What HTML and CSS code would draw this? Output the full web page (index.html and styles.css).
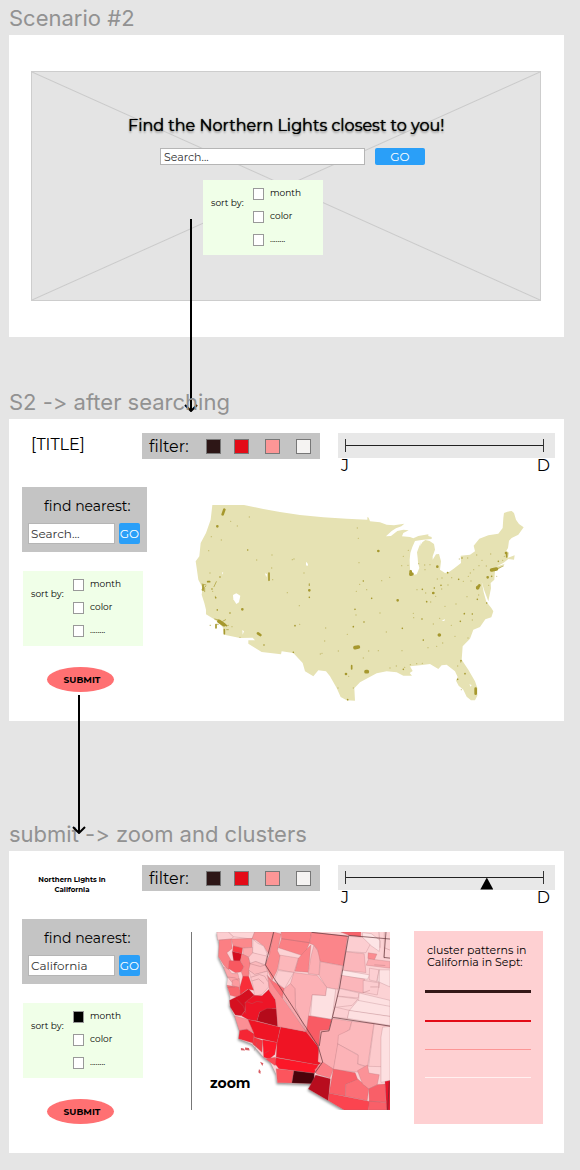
FILE: index.html
```html
<!DOCTYPE html>
<html lang="en">
<head>
<meta charset="utf-8">
<meta name="viewport" content="width=device-width, initial-scale=1">
<title>Northern Lights wireframes</title>
<link rel="stylesheet" href="styles.css">
</head>
<body>
<main class="board">
  <section class="screen">
    <h2 class="screen-name">Scenario #2</h2>
    <div class="frame frame-hero">
      <div class="hero">
        <div class="hero-body">
          <h1 class="hero-title">Find the Northern Lights closest to you!</h1>
          <form class="search search-wide">
            <input class="field" type="text" aria-label="Search location" placeholder="Search...">
            <button class="go" type="button">GO</button>
          </form>
          <fieldset class="sort">
            <legend class="sort-label">sort by:</legend>
            <div class="options">
              <label class="option"><input type="checkbox"><span>month</span></label>
              <label class="option"><input type="checkbox"><span>color</span></label>
              <label class="option"><input type="checkbox"><span>........</span></label>
            </div>
          </fieldset>
        </div>
      </div>
    </div>
    <svg class="arrow arrow-search" viewBox="0 0 14 193" aria-hidden="true"><path d="M7 0V191M1 186L7 192L13 186"/></svg>
  </section>

  <section class="screen screen-results">
    <h2 class="screen-name">S2 -&gt; after searching</h2>
    <div class="frame">
      <header class="top">
        <h3 class="title">[TITLE]</h3>
        <div class="filter">
          <span>filter:</span>
          <button class="swatch dark" type="button" aria-label="Dark"></button>
          <button class="swatch red" type="button" aria-label="Red"></button>
          <button class="swatch pink" type="button" aria-label="Pink"></button>
          <button class="swatch white" type="button" aria-label="White"></button>
        </div>
        <div class="months">
          <div class="rail"><input class="range range-empty" type="range" aria-label="Month" min="0" max="100" value="0"></div>
          <div class="ends"><span>J</span><span>D</span></div>
        </div>
      </header>
      <div class="content">
        <aside class="side">
          <form class="finder">
            <label class="finder-label" for="near1">find nearest:</label>
            <div class="search">
              <input class="field" id="near1" type="text" placeholder="Search...">
              <button class="go" type="button">GO</button>
            </div>
          </form>
          <fieldset class="sort">
            <legend class="sort-label">sort by:</legend>
            <div class="options">
              <label class="option"><input type="checkbox"><span>month</span></label>
              <label class="option"><input type="checkbox"><span>color</span></label>
              <label class="option"><input type="checkbox"><span>........</span></label>
            </div>
          </fieldset>
          <button class="submit" type="button">SUBMIT</button>
        </aside>
        <svg class="usa" viewBox="15 40 990 600" role="img" aria-label="Map of the United States">
          <path fill="#e6e2b3" d="M67 46H162L220 58L270 67L330 76L400 83L470 87L532 90V82L536 84L540 95L570 98L590 105L612 107L643 102L634 110L618 116L605 124L588 140L603 139L622 124L640 120L656 122L640 130L636 140L660 142L670 146L685 139L715 134V139L725 142V148L700 150L675 154L667 172L661 190L659 210L660 238L667 256L680 254L688 235L684 218L683 205L681 188L686 174L693 157L690 170L697 158L706 151L719 154L732 163L735 180L728 200V210L738 194L747 193L753 215L750 240L765 250L778 246L790 238L813 220L812 198L840 195L855 185L851 168L868 147L895 137L925 132L938 115L940 85L942 70L952 66L965 64L972 70L978 90L987 103L1001 113L985 135L965 145L957 153L954 175L949 183L957 189L954 204L974 197L972 210L955 208L940 220L918 231L945 222L928 237L915 243L913 270L902 280L903 296L895 335L882 300L875 275L881 308L889 336L904 355L910 365L904 383L886 389L870 412L850 420L840 447L818 470L815 510L835 540L855 575L862 595V618L855 632L843 632L830 621L820 600L806 588L798 573L803 562L795 545L770 525L755 527L745 538L720 523L690 527L660 530L668 544L659 550L666 558L640 558L620 548L590 545L560 551L510 578L493 596L495 633L470 632L452 622L440 595L420 560L408 545L385 542L370 560L345 545L338 520L310 490L275 485L273 494L215 487L175 462V452H195L188 444L150 445L103 435L98 412L75 390L48 374V360L43 340L35 315L38 295L25 270L20 235L17 215L28 200L32 160L48 130L62 90Z"/>
          <g fill="#fff"><path d="M129 316L139 311L151 318L147 338L139 343L130 329Z"/><path d="M348 216L354 223L353 229L348 227ZM225 251L231 254L229 263ZM157 421L162 425L158 435ZM755 393L765 388L763 394ZM838 584L845 586L842 591ZM97 247L100 249L96 255Z"/></g>
          <g class="city">
            <path stroke-width="4" opacity=".5" d="M122 95h0M142 109h0M178 82h0M94 151h0M64 141h0M56 183h0M200 211h0M246 196h0M292 309h0M312 208h0M358 282h0M328 348h0M329 404h0M307 210h0M396 491h0M404 454h0M407 415h0M445 484h0M472 434h0M502 115h0M505 146h0M507 219h0M509 284h0M498 376h0M499 305h0M530 300h0M575 273h0M599 263h0M589 427h0M636 483h0M619 529h0M570 370h0M654 227h0M635 228h0M640 200h0M655 182h0M686 222h0M704 226h0M720 225h0M705 240h0M742 268h0M756 265h0M785 264h0M808 208h0M833 205h0M860 196h0M902 193h0M876 212h0M867 228h0M889 229h0M851 240h0M835 260h0M843 274h0M820 275h0M774 286h0M737 320h0M722 337h0M765 350h0M798 343h0M831 321h0M866 316h0M847 391h0M834 445h0M795 440h0M740 470h0M714 474h0M700 452h0M671 384h0M670 371h0M758 460h0M784 407h0M749 386h0M730 403h0M812 517h0M803 529h0M697 521h0M680 522h0M565 483h0M536 484h0M520 505h0M444 595h0M490 595h0M476 560h0M391 493h0M342 250h0M245 235h0M248 270h0M60 250h0M76 320h0M82 360h0M68 305h0M126 411h0M115 407h0M150 443h0M600 535h0M644 533h0M661 525h0M814 600h0M938 212h0M943 200h0M920 260h0M896 287h0M841 250h0M755 298h0M707 310h0M681 300h0"/>
            <path stroke-width="5" d="M173 181h0M53 276h6M39 286v16M66 298h0M77 324h0M82 361h0M237 250v22M358 286h0M358 323h0M315 408h0M222 466h0M310 488h0M485 528v10M473 630h0M490 411h0M522 397h0M495 359h0M520 274h0M545 326h0M637 416h0M697 299h0M729 311h0M733 295h0M753 287h0M710 336h0M773 249h0M806 269h0M816 205h0M811 395h0M847 373h0M823 372h0M862 329h0M890 340h0M813 513h0M825 552h0M803 569h0M700 451h0M696 388h0M747 436h0M640 539h0M530 546h0M905 260h0M925 215h0M950 190v12M100 402L110 408M78 405v10M103 420v12M90 262h0M120 370h0"/>
            <path stroke-width="8" d="M98 74L103 60M82 110h0M157 359h0M204 431L211 436M468 553h0M358 302h0M565 184h0M623 332h0M662 245v10M742 231h0M730 310h0M862 295L868 287M893 263h0M857 597v15M948 190h0"/>
            <path stroke-width="11" d="M87 395L102 405M495 474L505 472M528 546h4M748 436h0M663 253h3M905 241L919 238M863 294h0"/>
          </g>
          <path class="city" stroke-width="2" d="M60 407h2M80 404h5M98 395L107 390M74 388L86 391M72 291L79 276M36 283L48 286M44 296V306M35 300L47 290M110 420h5M925 236L940 229"/>
        </svg>
      </div>
    </div>
    <svg class="arrow arrow-submit" viewBox="0 0 14 139" aria-hidden="true"><path d="M7 0V137M1 132L7 138L13 132"/></svg>
  </section>

  <section class="screen screen-zoom">
    <h2 class="screen-name">submit -&gt; zoom and clusters</h2>
    <div class="frame">
      <header class="top">
        <h3 class="title title-small">Northern Lights in California</h3>
        <div class="filter">
          <span>filter:</span>
          <button class="swatch dark" type="button" aria-label="Dark"></button>
          <button class="swatch red" type="button" aria-label="Red"></button>
          <button class="swatch pink" type="button" aria-label="Pink"></button>
          <button class="swatch white" type="button" aria-label="White"></button>
        </div>
        <div class="months">
          <div class="rail"><input class="range" type="range" aria-label="Month" min="0" max="100" value="73"></div>
          <div class="ends"><span>J</span><span>D</span></div>
        </div>
      </header>
      <div class="content">
        <aside class="side">
          <form class="finder">
            <label class="finder-label" for="near2">find nearest:</label>
            <div class="search">
              <input class="field" id="near2" type="text" value="California">
              <button class="go" type="button">GO</button>
            </div>
          </form>
          <fieldset class="sort">
            <legend class="sort-label">sort by:</legend>
            <div class="options">
              <label class="option"><input type="checkbox" checked><span>month</span></label>
              <label class="option"><input type="checkbox"><span>color</span></label>
              <label class="option"><input type="checkbox"><span>........</span></label>
            </div>
          </fieldset>
          <button class="submit" type="button">SUBMIT</button>
        </aside>
        <figure class="detail">
          <svg class="california" viewBox="21 36 591 531" role="img" aria-label="County map of California">
            <path class="land" d="M95 36H612V567H475L420 535L368 505L375 490L275 486L272 460L255 425L235 410L200 370L160 355L163 330L150 290L133 255L135 230L125 195L128 170L115 140L100 110L103 75Z"/>
            <g class="county">
              <path fill="#fccdd0" d="M95 36H130L145 50L138 57L97 60Z"/>
              <path fill="#fdd5d7" d="M130 36H208L200 57L145 50Z"/>
              <path fill="#fb9598" d="M208 36H264L252 105L235 78L212 60L200 57Z"/>
              <path fill="#fb7f83" d="M102 60L138 57L141 85L125 98L140 125L130 150L116 135L100 110Z"/>
              <path fill="#fb898c" d="M138 57L200 55V82L172 84L144 77Z"/>
              <path fill="#f93b43" d="M144 77L172 84L170 101L142 94Z"/>
              <path fill="#d40d1e" d="M141 94L170 101L165 126L145 122Z"/>
              <path fill="#f85860" d="M132 122H165L176 140L168 155L151 158L130 145Z"/>
              <path fill="#fbaaad" d="M175 84L202 82V105L190 111L174 104Z"/>
              <path fill="#fa8084" d="M170 101L190 111L195 130L190 168L173 170L168 155L176 140L165 122Z"/>
              <path fill="#fca6a9" d="M115 140L130 147L140 160L158 160L162 178L142 188L127 170Z"/>
              <path fill="#fdd4d6" d="M203 58L218 70L235 78L245 100L240 112L202 98Z"/>
              <path fill="#fccbce" d="M202 98L244 108L240 134L211 124L195 130L190 111Z"/>
              <path fill="#fbb9bc" d="M195 130L211 124L240 136L246 153L208 163L190 150Z"/>
              <path fill="#fcc5c8" d="M190 150L208 163L246 153L250 200L230 222L208 228L203 196Z"/>
              <path fill="#fb9b9f" d="M142 180L162 175L165 205L140 195Z"/>
              <path fill="#f9666c" d="M125 195L160 200L170 220L155 230L135 225Z"/>
              <path fill="#f92e39" d="M173 168L190 168L205 210L187 207L165 223L164 200Z"/>
              <path fill="#d51020" d="M133 240L165 224L190 206L207 225L183 245L180 270L168 286L150 284L135 260Z"/>
              <path fill="#ed1527" d="M180 245L207 225L230 226L250 208L270 238L275 265L262 265L223 275L215 302L188 297L168 286L180 270Z"/>
              <path fill="#b50b1b" d="M223 275L245 264L275 265L277 318L215 302Z"/>
              <path fill="#fb8f94" d="M148 286L188 297L205 337L185 326L162 330Z"/>
              <path fill="#ef1424" d="M188 297L285 320L275 366L207 350L205 337Z"/>
              <path fill="#f52634" d="M163 330L185 326L206 340L205 368L160 355Z"/>
              <path fill="#f43641" d="M206 350L232 360L230 395L202 370Z"/>
              <path fill="#fc1728" d="M232 358L275 366L268 402L252 415L235 410Z"/>
              <path fill="#ef1424" d="M286 319L362 334L396 376L411 424L398 433L272 410L275 366Z"/>
              <path fill="#fc4b54" d="M240 414L270 410L276 433L267 434Z"/>
              <path fill="#fc1728" d="M272 411L398 433L386 458L280 444L270 430Z"/>
              <path fill="#fc555d" d="M272 444L325 450L319 487L276 486Z"/>
              <path fill="#4b030b" d="M325 450L386 458L386 478L393 490L319 487Z"/>
              <path fill="#fb8e93" d="M248 170L270 204L302 248L362 334L277 318L270 238L252 212Z"/>
              <path fill="#fb7178" d="M245 165L260 181L296 205L291 234L267 202Z"/>
              <path fill="#fb898c" d="M265 36L287 42L276 92L284 108L275 151L260 181L240 134L252 105Z"/>
              <path fill="#fb8084" d="M287 36H378L372 68L288 56ZM288 56L372 68L355 108L279 83Z"/>
              <path fill="#fcb7ba" d="M284 105L339 114L325 157L278 148Z"/>
              <path fill="#fb8287" d="M355 96L376 75L368 156L328 153L339 114Z"/>
              <path fill="#fcafb3" d="M385 75L404 104L400 164L368 160L376 110Z"/>
              <path fill="#fb858a" d="M378 37L485 48L473 137L404 124L396 90L385 75L372 70Z"/>
              <path fill="#fbb2b6" d="M404 125L470 137L457 207L423 202L401 166Z"/>
              <path fill="#fcb1b5" d="M325 157L395 166L423 201L420 226L380 223L369 288L362 334L330 262L328 205L315 190Z"/>
              <path fill="#fccdd0" d="M278 151L325 157L297 205L266 180Z"/>
              <path fill="#fbaaae" d="M297 205L315 190L328 205L330 265L362 334L291 228Z"/>
              <path fill="#fde0e1" d="M423 202L450 207L439 297L375 286L380 224L420 226Z"/>
              <path fill="#f95b64" d="M369 286L438 297L430 328L407 334L399 378L362 334Z"/>
              <path fill="#fbadb1" d="M439 294L498 303L491 327L461 348L444 445L397 423L403 330L430 328Z"/>
              <path fill="#fcb9bc" d="M498 303L564 309L545 438L516 430L516 402L456 370L458 344L492 328Z"/>
              <path fill="#fcb3b7" d="M456 370L517 404L515 430L545 440L515 454L443 447Z"/>
              <path fill="#fccacc" d="M565 309L612 317L590 350L588 438L548 437Z"/>
              <path fill="#fde0e1" d="M590 320L612 318V480L585 485V350Z"/>
              <path fill="#fb7d84" d="M411 424L443 445L433 472L393 460L387 447Z"/>
              <path fill="#b80d1e" d="M390 463L434 474L428 540L368 505Z"/>
              <path fill="#f95f67" d="M443 445L508 456L516 477L480 491L479 526L430 517Z"/>
              <path fill="#fb6f76" d="M516 475L549 504L544 540L479 526L480 491Z"/>
              <path fill="#fb9297" d="M515 450L545 433L549 457L580 462L574 492L549 504L530 490Z"/>
              <path fill="#fb444f" d="M430 517L552 542L547 567H475L428 540Z"/>
              <path fill="#f95f68" d="M549 504L576 491L598 490L600 544L550 541ZM550 541L602 545V567H547Z"/>
              <path fill="#e9142a" d="M597 482L612 479V567H602Z"/>
              <path fill="#f9626a" d="M465 36H525V50L489 46Z"/>
              <path fill="#fcced1" d="M488 49L563 54L540 98L481 94Z"/>
              <path fill="#fbb7bb" d="M480 95L535 101L540 157L473 150Z"/>
              <path fill="#fee8e8" d="M470 150L551 164L545 177L466 167Z"/>
              <path fill="#fbb6ba" d="M466 165L536 177L532 218L462 204Z"/>
              <path fill="#fccfd2" d="M458 204L520 218L517 233L454 227Z"/>
              <path fill="#fde0e1" d="M520 218L612 240V260L518 245Z"/>
              <path fill="#fcd2d4" d="M454 228L516 236L499 255L448 261Z"/>
              <path fill="#fde1e2" d="M516 240L612 258V288L490 271Z"/>
              <path fill="#fccfd2" d="M448 260L491 270L485 294L440 290Z"/>
              <path fill="#fde0e1" d="M490 270L612 288V315L485 294Z"/>
              <path fill="#fde5e6" d="M530 38L556 41L584 62L580 94L557 78L530 52Z"/>
              <path fill="#fb8c91" d="M547 98L573 102L565 120L546 115Z"/>
              <path fill="#fbacb0" d="M548 116L612 124V144L541 135Z"/>
              <path fill="#fccfd2" d="M551 144L580 149L572 184L550 179Z"/>
              <path fill="#fde2e3" d="M579 149H612V200L574 183Z"/>
              <path fill="#fccdd0" d="M532 180L580 188L574 224L532 216Z"/>
            </g>
            <path class="county-line" d="M125 170L150 173L160 182M126 202L150 200M192 130L225 139L240 134M197 171L222 163L238 168L247 184M200 182L220 176L236 190M187 245L200 250L215 243L232 246M178 248L187 243M155 237L175 258L182 279M215 365L207 390M237 398L252 390M579 36L582 83M595 36V115M565 134L598 136M580 149L579 203M553 200H576M595 83L612 90M532 217L552 210"/>
            <path class="state-line" d="M265 36L240 134L397 376L411 424L387 458M378 37L488 49L461 204L440 291L438 300L430 331L407 334L401 376M442 291L612 317M488 46L612 57M600 36L594 112L612 114M610 483L605 567"/>
            <path class="island" d="M167 382L175 384L180 390L167 389ZM179 381L191 382L193 390L180 388ZM224 423L234 428L231 436ZM221 445L226 452L225 460L219 455Z"/>
          </svg>
          <figcaption class="zoom-label">zoom</figcaption>
        </figure>
        <section class="clusters">
          <h4 class="clusters-title">cluster patterns in California in Sept:</h4>
          <div class="lines">
            <hr class="line line-dark">
            <hr class="line line-red">
            <hr class="line line-pink">
            <hr class="line line-white">
          </div>
        </section>
      </div>
    </div>
  </section>
</main>
</body>
</html>
```

FILE: styles.css
```css
* { box-sizing: border-box; }

body {
  margin: 0;
  background: #e5e5e5;
  color: #000;
  font-family: Montserrat, Inter, "Open Sans", sans-serif;
}

h1, h2, h3, h4, fieldset, figure, hr, legend { margin: 0; padding: 0; border: 0; }
button, input { font-family: inherit; margin: 0; }

.board { padding: 5px 16px 16px 9px; }
.screen { position: relative; }
.screen-results { margin-top: 52px; }
.screen-zoom { margin-top: 100px; }

.screen-name {
  font-family: Inter, sans-serif;
  font-size: 22px;
  font-weight: 400;
  font-feature-settings: "calt" 0;
  line-height: 26px;
  padding-bottom: 4px;
  color: #929292;
}

.frame {
  background: #fff;
  min-height: 302px;
  padding: 14px 9px 0 13px;
}

/* Landing screen */
.frame-hero { padding: 36px 23px 36px 22px; }
.hero {
  display: flex;
  justify-content: center;
  min-height: 230px;
  padding-top: 44px;
  border: 1px solid #cdcdcd;
  background:
    linear-gradient(to top right, transparent calc(50% - 1px), #cacaca 50%, transparent calc(50% + 1px)),
    linear-gradient(to bottom right, transparent calc(50% - 1px), #cacaca 50%, transparent calc(50% + 1px)),
    #e4e4e4;
}
.hero-body { width: 316px; }
.hero-title {
  font-size: 16px;
  font-weight: 400;
  line-height: 20px;
  white-space: nowrap;
  text-shadow: 0 0 1px #000, 0 2px 2px rgba(0, 0, 0, .3);
}

.search { display: flex; gap: 4px; }
.search-wide { gap: 10px; padding-left: 32px; margin-top: 12px; }
.field {
  flex: 1;
  width: 0;
  min-width: 0;
  height: 21px;
  padding: 0 2px;
  border: 1px solid #b5b5b5;
  background: #fff;
  color: #333;
  font-size: 12px;
}
.field::placeholder { color: #333; opacity: 1; }
.go {
  width: 21px;
  padding: 0;
  border: 0;
  border-radius: 2px;
  background: #2a9ff8;
  color: #fff;
  font-size: 12px;
}
.search-wide .field { flex: 0 0 205px; height: 17px; padding: 0 3px; font-size: 11px; }
.search-wide .go { width: 50px; }

.sort {
  display: flex;
  width: 120px;
  min-height: 75px;
  padding: 8px 8px 9px 8px;
  background: #f0ffe8;
  font-size: 9px;
}
.hero .sort { margin: 15px 0 0 75px; }
.sort-label { float: left; width: 42px; padding-top: 9px; line-height: 11px; }
.options { display: flex; flex-direction: column; gap: 11px; }
.option { display: flex; align-items: center; gap: 6px; height: 12px; line-height: 10px; }
.option span { padding-bottom: 2px; }
.option input {
  appearance: none;
  width: 11px;
  height: 12px;
  border: 1px solid #999;
  background: #fff;
}
.option input:checked { background: #000; }

/* Result screens */
.top { display: flex; align-items: flex-start; min-height: 54px; }
.title {
  width: 120px;
  padding-left: 9px;
  font-size: 16px;
  font-weight: 400;
  line-height: 24px;
}
.title-small {
  padding: 10px 22px 0 2px;
  font-size: 7px;
  font-weight: 700;
  line-height: 10px;
  text-align: center;
}
.filter {
  display: flex;
  align-items: center;
  width: 178px;
  height: 26px;
  padding-left: 7px;
  background: #c4c4c4;
  font-size: 16px;
}
.filter span { flex: 0 0 57px; }
.swatch { flex: none; width: 15px; height: 15px; padding: 0; margin-right: 13px; border: 1px solid #777; }
.red, .pink { margin-right: 16px; }
.dark { background: #2d1616; }
.red { background: #e30b17; }
.pink { background: #fc9696; }
.white { margin-right: 0; background: #f5f3f2; }

.months { flex: 1; margin-left: 18px; }
.rail { height: 25px; padding: 6px 11px 6px 7px; background: #e8e8e8; }
.range {
  display: block;
  appearance: none;
  width: 100%;
  height: 13px;
  margin: 0;
  border: solid #333;
  border-width: 0 1px;
  background: linear-gradient(#222, #222) 0 6px / 100% 1px no-repeat;
}
.range::-webkit-slider-thumb {
  appearance: none;
  width: 13px;
  height: 12px;
  margin-top: 12px;
  background: #000;
  clip-path: polygon(50% 0, 100% 100%, 0 100%);
}
.range-empty::-webkit-slider-thumb { opacity: 0; }
.ends {
  display: flex;
  justify-content: space-between;
  padding: 0 5px 0 3px;
  font-size: 16px;
  line-height: 16px;
}

.content { display: flex; align-items: flex-start; }
.side { flex: 0 0 125px; min-width: 0; }
.finder {
  min-height: 65px;
  padding: 10px 7px 8px 6px;
  background: #c4c4c4;
}
.finder-label {
  display: block;
  padding-left: 16px;
  margin-bottom: 7px;
  font-size: 14px;
  line-height: 19px;
  white-space: nowrap;
}
.side .sort { margin: 19px 0 0 1px; }
.submit {
  display: block;
  width: 67px;
  height: 25px;
  margin: 21px 0 0 25px;
  padding: 0 0 0 3px;
  border: 0;
  border-radius: 50%;
  background: #ff7072;
  font-size: 9px;
  font-weight: 700;
}

.usa { flex: 1; min-width: 0; margin: 16px 30px 0 48px; }
.city { fill: none; stroke: #a6982e; stroke-linecap: round; stroke-linejoin: round; }

.detail {
  position: relative;
  flex: 1;
  min-width: 0;
  margin: 13px 24px 0 44px;
  border-left: 1px solid #777;
}
.california { display: block; width: 100%; }
.land { fill: #fcd2d4; filter: drop-shadow(-2px 5px 3px #999); }
.county { stroke: #a76a70; stroke-width: 1; stroke-opacity: .75; stroke-linejoin: round; }
.county-line { fill: none; stroke: #a76a70; stroke-width: 1; }
.state-line { fill: none; stroke: #5d3035; stroke-width: 2; }
.island { fill: #d85b62; }
.zoom-label {
  position: absolute;
  left: 18px;
  bottom: 18px;
  font-size: 14px;
  font-weight: 700;
  line-height: 18px;
}

.clusters {
  flex: 0 0 129px;
  min-height: 193px;
  margin: 12px 12px 0 0;
  padding: 13px 10px 0 11px;
  background: #fed0d2;
}
.clusters-title {
  padding-left: 2px;
  font-size: 11px;
  font-weight: 400;
  line-height: 12px;
}
.lines { display: flex; flex-direction: column; gap: 27px; width: 106px; margin-top: 22px; }
.line-dark { height: 3px; background: #341818; }
.line-red { height: 2px; background: #e30b17; }
.line-pink { height: 1px; background: #fc9696; }
.line-white { height: 1px; background: #fff0f0; }

/* Flow arrows that cross from one frame to the next */
.arrow { position: absolute; width: 14px; fill: none; stroke: #000; stroke-width: 2; }
.arrow-search { left: 175px; top: 214px; height: 193px; }
.arrow-submit { left: 63px; top: 306px; height: 139px; z-index: 1; }
```
